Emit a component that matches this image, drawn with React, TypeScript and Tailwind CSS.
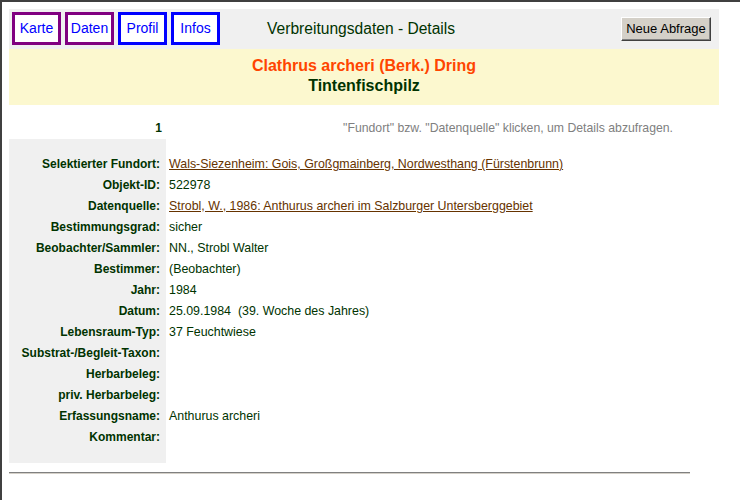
const rows: { label: string; value?: string; link?: boolean }[] = [
  { label: 'Selektierter Fundort:', value: 'Wals-Siezenheim: Gois, Großgmainberg, Nordwesthang (Fürstenbrunn)', link: true },
  { label: 'Objekt-ID:', value: '522978' },
  { label: 'Datenquelle:', value: 'Strobl, W., 1986: Anthurus archeri im Salzburger Untersberggebiet', link: true },
  { label: 'Bestimmungsgrad:', value: 'sicher' },
  { label: 'Beobachter/Sammler:', value: 'NN., Strobl Walter' },
  { label: 'Bestimmer:', value: '(Beobachter)' },
  { label: 'Jahr:', value: '1984' },
  { label: 'Datum:', value: '25.09.1984\u00a0\u00a0(39. Woche des Jahres)' },
  { label: 'Lebensraum-Typ:', value: '37 Feuchtwiese' },
  { label: 'Substrat-/Begleit-Taxon:' },
  { label: 'Herbarbeleg:' },
  { label: 'priv. Herbarbeleg:' },
  { label: 'Erfassungsname:', value: 'Anthurus archeri' },
  { label: 'Kommentar:' },
]

const tabs = [
  { name: 'Karte', visited: true },
  { name: 'Daten', visited: true },
  { name: 'Profil', visited: false },
  { name: 'Infos', visited: false },
]

export default function App() {
  return (
    <div className="min-h-[500px] border-l-2 border-t-2 border-[#404040] bg-white pl-[7px] pt-[7px] font-['Liberation_Sans',Arial,sans-serif] text-[12px] text-[#003300]">
      {/* header */}
      <div className="w-[710px]">
        <div className="flex h-[40px] items-start bg-[#f0f0f0] pl-[3px] pt-[3px]">
          <div className="flex gap-[4px]">
            {tabs.map((tb) => (
              <div
                key={tb.name}
                className={
                  tb.visited
                    ? 'flex h-[33px] w-[49px] items-center justify-center border-[3px] border-[#800080] bg-white text-[14px] text-[#0000ff]'
                    : 'flex h-[33px] w-[49px] items-center justify-center border-[3px] border-[#0000ff] bg-white text-[14px] text-[#0000ff]'
                }
              >
                {tb.name}
              </div>
            ))}
          </div>
          <div className="ml-[47px] flex h-[34px] items-center text-[15.6px] text-[#003300]">Verbreitungsdaten - Details</div>
          <div className="ml-auto mr-[8px] flex h-[34px] items-center">
            <button className="h-[24px] w-[90px] border border-b-[#404040] border-l-white border-r-[#404040] border-t-white bg-[#d4d0c8] text-[13px] text-black shadow-[inset_-1px_-1px_0_#808080]">
              Neue Abfrage
            </button>
          </div>
        </div>
        <div className="flex h-[56px] flex-col items-center justify-center bg-[#fcf8cf] pb-[2px] text-[16px] font-bold leading-[20px]">
          <div className="text-[#ff4500]">Clathrus archeri (Berk.) Dring</div>
          <div className="text-[#003300]">Tintenfischpilz</div>
        </div>
      </div>

      {/* count + hint */}
      <div className="mt-[12px] flex h-[22px] w-[681px] items-center">
        <div className="w-[157px] pr-[4px] text-right font-bold">1</div>
        <div className="flex-1 pr-[17px] text-right text-[12.25px] text-[#808080]">"Fundort" bzw. "Datenquelle" klicken, um Details abzufragen.</div>
      </div>

      {/* details */}
      <div className="flex flex-col">
        <div className="h-[15px] w-[157px] bg-[#f0f0f0]" />
        {rows.map((r) => (
          <div key={r.label} className="flex h-[21px] items-baseline leading-[21px]">
            <div className="h-[21px] w-[157px] bg-[#f0f0f0] pr-[6px] text-right font-bold">{r.label}</div>
            <div className="pl-[3px] text-[12.4px]">
              {r.link ? <span className="text-[#663300] underline">{r.value}</span> : r.value}
            </div>
          </div>
        ))}
        <div className="h-[15px] w-[157px] bg-[#f0f0f0]" />
      </div>

      <div className="mt-[9px] w-[681px] border-b border-t border-b-[#d4d0c8] border-t-[#808080]" />
    </div>
  )
}
